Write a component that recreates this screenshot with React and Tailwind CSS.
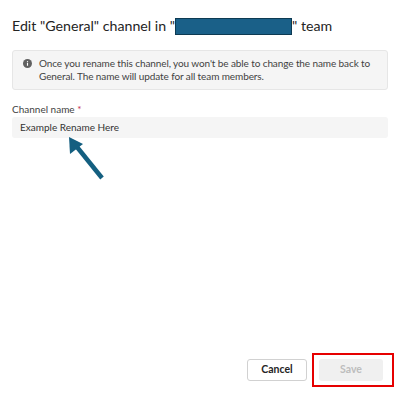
export default function App() {
  return (
    <div
      className="relative flex h-[393px] w-[400px] flex-col bg-white px-3 text-[#242424]"
      style={{ fontFamily: 'Lato, "Noto Sans", sans-serif' }}
    >
      {/* Title */}
      <h1 className="mt-[15px] flex items-center text-[14.2px] font-normal leading-[22px]">
        <span>Edit "General" channel in "</span>
        <span className="inline-block h-[17px] w-[117px] border border-[#0d3a52] bg-[#1a6088]" />
        <span>" team</span>
      </h1>

      {/* Info banner */}
      <div className="mt-[13px] flex items-start gap-[7px] rounded-[3px] border border-[#e6e6e6] bg-[#f5f5f5] py-[6px] pl-[10px] pr-3 text-[10px] leading-[13px] text-[#424242]">
        <svg className="mt-[2px] h-[9px] w-[9px] shrink-0" viewBox="0 0 16 16">
          <circle cx="8" cy="8" r="8" fill="#616161" />
          <rect x="7" y="7" width="2" height="5" fill="#fff" />
          <circle cx="8" cy="4.8" r="1.1" fill="#fff" />
        </svg>
        <p className="tracking-[-0.1px]">
          Once you rename this channel, you won't be able to change the name back to General. The name will update for all team members.
        </p>
      </div>

      {/* Field */}
      <label className="mt-[12px] text-[10px] leading-[14px] text-[#424242]">
        Channel name <span className="text-[#c4314b]">*</span>
      </label>
      <div className="mt-px flex h-[21px] items-center rounded-[3px] bg-[#f5f5f5] px-2 text-[10px] text-[#333]">
        Example Rename Here
      </div>

      {/* Annotation arrow */}
      <svg className="absolute left-[60px] top-[132px]" width="50" height="52" viewBox="0 0 50 52">
        <line x1="42" y1="46" x2="17" y2="15" stroke="#145f80" strokeWidth="4.5" />
        <polygon points="9,5 10,22 23,12" fill="#145f80" />
      </svg>

      <div className="flex-1" />

      {/* Footer */}
      <div className="mb-[12px] flex justify-end gap-3 pr-[5px]">
        <button className="flex h-[22px] w-[60px] items-center justify-center rounded-[3px] border border-[#d1d1d1] bg-white text-[10.5px] font-bold text-[#242424]">
          Cancel
        </button>
        <div className="relative flex">
          <button className="flex h-[22px] w-[64px] items-center justify-center rounded-[3px] bg-[#f0f0f0] text-[10.5px] font-bold text-[#bdbdbd]">
            Save
          </button>
          <div className="pointer-events-none absolute -inset-y-[6px] -left-[7px] -right-[11px] border-2 border-[#e60000]" />
        </div>
      </div>
    </div>
  );
}
